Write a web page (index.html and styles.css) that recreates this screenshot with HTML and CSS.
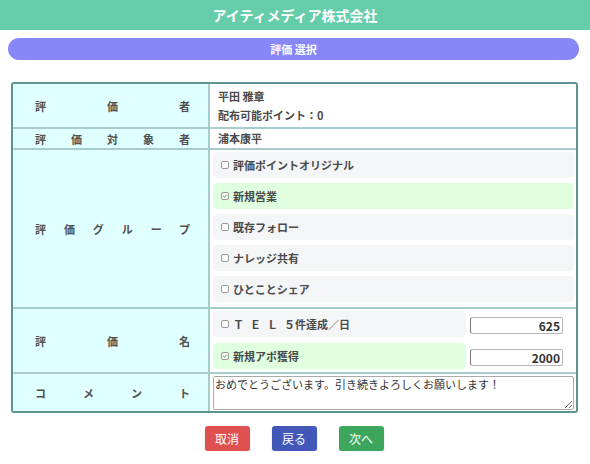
FILE: index.html
```html
<!DOCTYPE html>
<html lang="ja">
<head>
<meta charset="utf-8">
<title>評価 選択</title>
<link rel="stylesheet" href="styles.css">
</head>
<body>
<header class="app-header">アイティメディア株式会社</header>
<div class="page-title">評価 選択</div>

<div class="form-table">
  <div class="label"><span>評価者</span></div>
  <div class="value value-evaluator">
    <div>平田 雅章</div>
    <div>配布可能ポイント：0</div>
  </div>

  <div class="label"><span>評価対象者</span></div>
  <div class="value value-target">浦本康平</div>

  <div class="label"><span>評価グループ</span></div>
  <div class="value group-list">
    <div class="option"><span class="check"></span>評価ポイントオリジナル</div>
    <div class="option selected"><span class="check checked"><svg viewBox="0 0 8 8"><path d="M1.6 4.2 L3.3 5.8 L6.4 2.2" fill="none" stroke="#2e8b3a" stroke-width="1.2"/></svg></span>新規営業</div>
    <div class="option"><span class="check"></span>既存フォロー</div>
    <div class="option"><span class="check"></span>ナレッジ共有</div>
    <div class="option"><span class="check"></span>ひとことシェア</div>
  </div>

  <div class="label"><span>評価名</span></div>
  <div class="value name-list">
    <div class="name-row">
      <div class="option"><span class="check"></span><span class="spaced">ＴＥＬ</span>５件達成／日</div>
      <input class="points" type="text" value="625">
    </div>
    <div class="name-row">
      <div class="option selected"><span class="check checked"><svg viewBox="0 0 8 8"><path d="M1.6 4.2 L3.3 5.8 L6.4 2.2" fill="none" stroke="#2e8b3a" stroke-width="1.2"/></svg></span>新規アポ獲得</div>
      <input class="points" type="text" value="2000">
    </div>
  </div>

  <div class="label label-last"><span>コメント</span></div>
  <div class="value value-last comment-cell">
    <textarea class="comment">おめでとうございます。引き続きよろしくお願いします！</textarea>
  </div>
</div>

<div class="actions">
  <button class="btn btn-cancel">取消</button>
  <button class="btn btn-back">戻る</button>
  <button class="btn btn-next">次へ</button>
</div>
</body>
</html>
```

FILE: styles.css
```css
* { box-sizing: border-box; }

body {
  margin: 0;
  background: #ffffff;
  font-family: "Noto Sans CJK JP", "Noto Sans", sans-serif;
  color: #333333;
}

.app-header {
  height: 30px;
  line-height: 30px;
  background: #66cdaa;
  color: #ffffff;
  font-size: 14px;
  font-weight: bold;
  text-align: center;
}

.page-title {
  margin: 8px 11px 0 8px;
  height: 22px;
  line-height: 22px;
  border-radius: 11px;
  background: #8787fa;
  color: #ffffff;
  font-size: 11px;
  font-weight: bold;
  text-align: center;
}

.form-table {
  margin: 22px 12px 0 11px;
  display: grid;
  grid-template-columns: 197px 1fr;
  border: 2px solid #5e9490;
  border-radius: 3px;
}

.label {
  background: #e0ffff;
  border-right: 2px solid #a6cccc;
  border-bottom: 2px solid #a6cccc;
  display: flex;
  align-items: center;
  padding: 0 18px 0 22px;
  font-size: 11px;
  font-weight: bold;
  color: #505050;
}

.label span {
  display: block;
  width: 100%;
  text-align: justify;
  text-align-last: justify;
}

.value {
  border-bottom: 2px solid #a6cccc;
  font-size: 11px;
  font-weight: bold;
  color: #4a4a4a;
}

.label-last, .value-last { border-bottom: none; }

.value-evaluator {
  padding: 3px 8px 2px;
  line-height: 19px;
}

.value-target {
  padding: 0 8px;
  line-height: 19px;
}

.group-list {
  padding: 2px 2px 5px 3px;
  display: flex;
  flex-direction: column;
  gap: 5px;
}

.option {
  height: 26px;
  border-radius: 4px;
  background: #f4f5f7;
  display: flex;
  align-items: center;
  padding-left: 8px;
}

.option.selected { background: #dfffdf; }

.check {
  width: 8px;
  height: 8px;
  border: 1px solid #999999;
  border-radius: 2px;
  background: #ffffff;
  margin-right: 4px;
  display: inline-flex;
}

.check svg { width: 100%; height: 100%; }

.spaced { letter-spacing: 6px; }

.name-list {
  padding: 2px 13px 3px 3px;
  display: flex;
  flex-direction: column;
  gap: 6px;
}

.name-row {
  display: flex;
  align-items: center;
  gap: 4px;
}

.name-row .option {
  flex: 1;
  height: 26px;
}

.points {
  width: 93px;
  height: 17px;
  margin-top: 3px;
  border: 1px solid #b5b5b5;
  border-left-color: #777777;
  border-radius: 3px 2px 2px 3px;
  padding: 0 2px;
  font-family: "Noto Sans CJK JP", sans-serif;
  font-size: 12px;
  font-weight: bold;
  color: #333333;
  text-align: right;
}

.comment-cell {
  padding: 2px 2px 1px 3px;
}

.comment {
  display: block;
  width: 100%;
  height: 34px;
  border: 1px solid #aaaaaa;
  border-radius: 2px;
  padding: 0 1px;
  font-family: "Noto Sans CJK JP", sans-serif;
  font-size: 11px;
  line-height: 15px;
  color: #333333;
  resize: vertical;
}

.actions {
  display: flex;
  justify-content: center;
  gap: 22px;
  margin-top: 13px;
  padding-right: 2px;
}

.btn {
  width: 45px;
  height: 25px;
  border: none;
  border-radius: 3px;
  color: #ffffff;
  font-family: "Noto Sans CJK JP", sans-serif;
  font-size: 12px;
  box-shadow: 0 2px 2px rgba(0, 0, 0, 0.18);
  padding: 0;
}

.btn-cancel { background: #df5050; }
.btn-back { background: #4158b8; }
.btn-next { background: #3ca75c; }
```
